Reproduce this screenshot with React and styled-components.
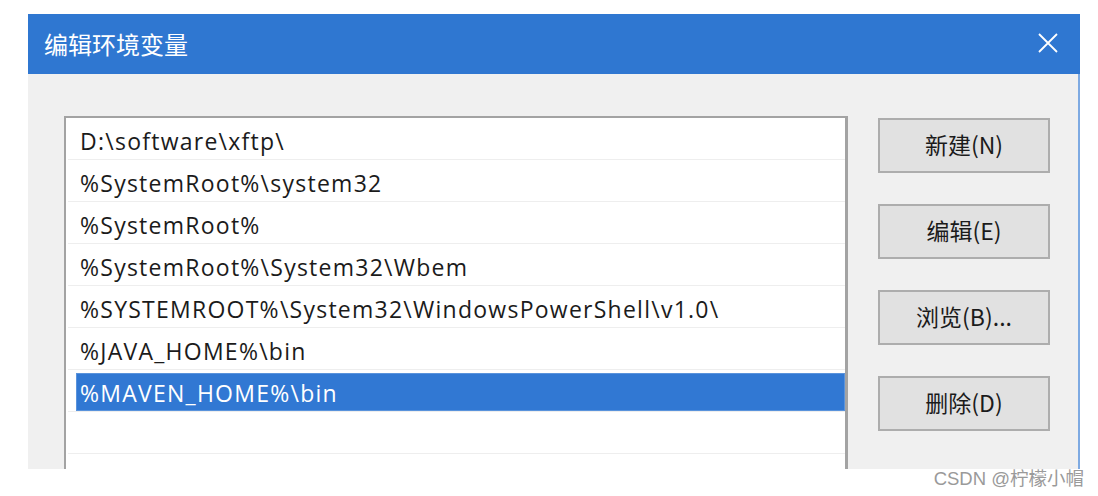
import React from 'react'
import styled, { createGlobalStyle } from 'styled-components'

const GlobalStyle = createGlobalStyle`
  html, body {
    margin: 0;
    padding: 0;
    background: #ffffff;
  }
  body {
    font-family: "Open Sans", "Noto Sans CJK SC", sans-serif;
  }
`

const Page = styled.div`
  position: relative;
  width: 1098px;
  height: 496px;
  padding: 14px 0 0 28px;
  box-sizing: border-box;
  overflow: hidden;
`

const Dialog = styled.div`
  width: 1052px;
  display: flex;
  flex-direction: column;
`

const TitleBar = styled.div`
  height: 60px;
  background: #2f77d1;
  display: flex;
  align-items: center;
  justify-content: space-between;
  padding: 0 20px 0 16px;
`

const Title = styled.span`
  color: #ffffff;
  font-family: "Noto Sans CJK SC", sans-serif;
  font-size: 24px;
  margin-top: -2px;
`

const CloseButton = styled.button`
  width: 24px;
  height: 24px;
  padding: 0;
  margin-top: -3px;
  border: none;
  background: transparent;
  display: flex;
  align-items: center;
  justify-content: center;
`

const Body = styled.div`
  height: 395px;
  box-sizing: border-box;
  background: #f0f0f0;
  border-right: 2px solid #7eaae2;
  padding: 42px 0 0 36px;
  display: flex;
  align-items: flex-start;
  overflow: hidden;
`

const ListBox = styled.div`
  width: 784px;
  height: 353px;
  box-sizing: border-box;
  background: #ffffff;
  border: 2px solid #a3a3a3;
  border-right-width: 3px;
  border-bottom: none;
  overflow: hidden;
`

const Row = styled.div`
  height: 42px;
  box-sizing: border-box;
  margin-left: 2px;
  padding-top: 3px;
  border-bottom: 1px solid #eeeeee;
  display: flex;
`

const Label = styled.div`
  flex: 1;
  margin-left: 8px;
  padding: 2px 0 0 4px;
  display: flex;
  align-items: center;
  font-size: 23px;
  letter-spacing: 1.25px;
  color: ${p => (p.$selected ? '#ffffff' : '#1b1b1b')};
  background: ${p => (p.$selected ? '#3178d3' : 'transparent')};
  box-shadow: ${p => (p.$selected ? 'inset 0 0 0 1px #5a93dc' : 'none')};
  white-space: nowrap;
`

const ButtonColumn = styled.div`
  margin-left: 30px;
  padding-top: 2px;
  display: flex;
  flex-direction: column;
  gap: 31px;
`

const Button = styled.button`
  width: 172px;
  height: 55px;
  background: #e1e1e1;
  border: 2px solid #adadad;
  font-family: "Noto Sans CJK SC", sans-serif;
  font-size: 23px;
  color: #1b1b1b;
  padding: 0 0 3px;
`

const Watermark = styled.div`
  position: absolute;
  right: 14px;
  bottom: 6px;
  font-family: "Liberation Sans", "Noto Sans CJK SC", sans-serif;
  font-size: 18.5px;
  color: #9a9a9a;
`

const paths = [
  'D:\\software\\xftp\\',
  '%SystemRoot%\\system32',
  '%SystemRoot%',
  '%SystemRoot%\\System32\\Wbem',
  '%SYSTEMROOT%\\System32\\WindowsPowerShell\\v1.0\\',
  '%JAVA_HOME%\\bin',
  '%MAVEN_HOME%\\bin',
  '',
  ''
]

const buttons = ['新建(N)', '编辑(E)', '浏览(B)...', '删除(D)']

const App = () => {
  const selected = 6

  return (
    <Page>
      <GlobalStyle />
      <Dialog>
        <TitleBar>
          <Title>编辑环境变量</Title>
          <CloseButton aria-label="close">
            <svg width="20" height="20" viewBox="0 0 20 20">
              <path d="M1 1 L19 19 M19 1 L1 19" stroke="#ffffff" strokeWidth="1.8" fill="none" />
            </svg>
          </CloseButton>
        </TitleBar>
        <Body>
          <ListBox>
            {paths.map((p, i) => (
              <Row key={i}>
                <Label $selected={i === selected}>{p}</Label>
              </Row>
            ))}
          </ListBox>
          <ButtonColumn>
            {buttons.map(b => (
              <Button key={b}>{b}</Button>
            ))}
          </ButtonColumn>
        </Body>
      </Dialog>
      <Watermark>CSDN @柠檬小帽</Watermark>
    </Page>
  )
}

export default App
